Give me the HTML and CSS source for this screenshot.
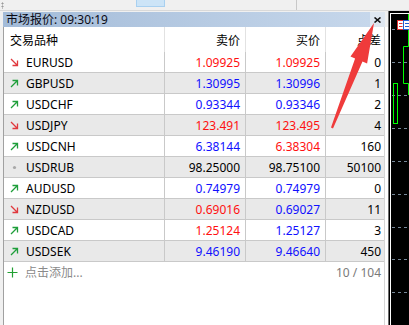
FILE: index.html
```html
<!DOCTYPE html>
<html lang="zh">
<head>
  <meta charset="UTF-8">
  <title>市场报价</title>
  <link rel="stylesheet" href="styles.css">
</head>
<body>
  <svg width="0" height="0" class="defs">
    <symbol id="icoDown" viewBox="0 0 9 9">
      <path d="M1 1 L7.5 7.5 M2.5 7.5 H7.5 V2.5" fill="none" stroke="#e0393e" stroke-width="1.3"/>
    </symbol>
    <symbol id="icoUp" viewBox="0 0 9 9">
      <path d="M1 8 L7.5 1.5 M2.5 1.5 H7.5 V6.5" fill="none" stroke="#1e9e3a" stroke-width="1.3"/>
    </symbol>
    <symbol id="icoFlat" viewBox="0 0 9 9">
      <circle cx="4.5" cy="4.5" r="1.6" fill="#a8a8a8"/>
    </symbol>
  </svg>

  <!-- 上方工具列殘留 -->
  <div id="topBar">
    <span class="grip"></span>
    <span class="tabBtn"></span>
    <span class="sepLine"></span>
  </div>

  <div id="workspace">
    <div id="dock">
      <div id="titleBar">
        <span class="titleText">市场报价: 09:30:19</span>
        <span class="closeBtn">
          <svg width="7" height="6" viewBox="0 0 7 6"><path d="M0.5 0.5 L6.5 5.5 M6.5 0.5 L0.5 5.5" stroke="#111" stroke-width="1.6"/></svg>
        </span>
      </div>

      <div id="quotePanel">
        <div class="quoteList">
          <div class="row head">
            <div class="cell sym">交易品种</div>
            <div class="cell num">卖价</div>
            <div class="cell num">买价</div>
            <div class="cell num">点差</div>
          </div>

          <div class="row">
            <div class="cell sym"><svg class="ico"><use href="#icoDown"/></svg>EURUSD</div>
            <div class="cell num red">1.09925</div>
            <div class="cell num red">1.09925</div>
            <div class="cell num">0</div>
          </div>
          <div class="row alt">
            <div class="cell sym"><svg class="ico"><use href="#icoUp"/></svg>GBPUSD</div>
            <div class="cell num blue">1.30995</div>
            <div class="cell num blue">1.30996</div>
            <div class="cell num">1</div>
          </div>
          <div class="row">
            <div class="cell sym"><svg class="ico"><use href="#icoUp"/></svg>USDCHF</div>
            <div class="cell num blue">0.93344</div>
            <div class="cell num blue">0.93346</div>
            <div class="cell num">2</div>
          </div>
          <div class="row alt">
            <div class="cell sym"><svg class="ico"><use href="#icoDown"/></svg>USDJPY</div>
            <div class="cell num red">123.491</div>
            <div class="cell num red">123.495</div>
            <div class="cell num">4</div>
          </div>
          <div class="row">
            <div class="cell sym"><svg class="ico"><use href="#icoUp"/></svg>USDCNH</div>
            <div class="cell num blue">6.38144</div>
            <div class="cell num red">6.38304</div>
            <div class="cell num">160</div>
          </div>
          <div class="row alt">
            <div class="cell sym"><svg class="ico"><use href="#icoFlat"/></svg>USDRUB</div>
            <div class="cell num">98.25000</div>
            <div class="cell num">98.75100</div>
            <div class="cell num">50100</div>
          </div>
          <div class="row">
            <div class="cell sym"><svg class="ico"><use href="#icoUp"/></svg>AUDUSD</div>
            <div class="cell num blue">0.74979</div>
            <div class="cell num blue">0.74979</div>
            <div class="cell num">0</div>
          </div>
          <div class="row alt">
            <div class="cell sym"><svg class="ico"><use href="#icoDown"/></svg>NZDUSD</div>
            <div class="cell num red">0.69016</div>
            <div class="cell num blue">0.69027</div>
            <div class="cell num">11</div>
          </div>
          <div class="row">
            <div class="cell sym"><svg class="ico"><use href="#icoUp"/></svg>USDCAD</div>
            <div class="cell num red">1.25124</div>
            <div class="cell num blue">1.25127</div>
            <div class="cell num">3</div>
          </div>
          <div class="row alt">
            <div class="cell sym"><svg class="ico"><use href="#icoUp"/></svg>USDSEK</div>
            <div class="cell num blue">9.46190</div>
            <div class="cell num blue">9.46640</div>
            <div class="cell num">450</div>
          </div>

          <!-- 新增品種 -->
          <div class="addRow">
            <svg class="plus" width="11" height="11" viewBox="0 0 11 11"><path d="M5.5 0.5 V10.5 M0.5 5.5 H10.5" stroke="#22a033" stroke-width="1.2"/></svg>
            <span class="addText">点击添加...</span>
            <span class="count">10 / 104</span>
          </div>
        </div>
      </div>
    </div>

    <!-- 右側圖表 -->
    <div id="chart">
      <svg width="21" height="314" viewBox="0 0 21 314">
        <line x1="0.5" y1="0" x2="0.5" y2="314" stroke="#6e6e6e"/>
        <line x1="2.5" y1="2" x2="2.5" y2="314" stroke="#ffffff"/>
        <line x1="2" y1="2.5" x2="21" y2="2.5" stroke="#ffffff"/>
        <g stroke="#778899" stroke-dasharray="3 3">
          <line x1="4" y1="18.5" x2="21" y2="18.5"/>
          <line x1="4" y1="51.5" x2="21" y2="51.5"/>
          <line x1="4" y1="84.5" x2="21" y2="84.5"/>
          <line x1="4" y1="117.5" x2="21" y2="117.5"/>
          <line x1="4" y1="150.5" x2="21" y2="150.5"/>
          <line x1="4" y1="183.5" x2="21" y2="183.5"/>
          <line x1="4" y1="216.5" x2="21" y2="216.5"/>
          <line x1="4" y1="248.5" x2="21" y2="248.5"/>
          <line x1="4" y1="281.5" x2="21" y2="281.5"/>
        </g>
        <g fill="none" stroke="#00ff00">
          <polyline points="20.5,3 20.5,35.5 15.5,35.5 15.5,72.5 20.5,72.5 20.5,84"/>
          <rect x="5.5" y="72.5" width="4" height="40"/>
        </g>
        <rect x="9.5" y="9.5" width="6" height="9" fill="#fff" stroke="#e03030"/>
        <path d="M11 12.5 H14.5 M11 15.5 H14.5" stroke="#e03030"/>
        <rect x="15.5" y="9.5" width="6" height="9" fill="#fff" stroke="#2060d0"/>
        <path d="M17 12.5 H21 M17 15.5 H21" stroke="#2060d0"/>
      </svg>
    </div>
  </div>

  <!-- 紅色標註箭頭 -->
  <svg id="markArrow" width="409" height="325" viewBox="0 0 409 325">
    <polygon points="331,127.6 355.1,58.5 350.5,56.6 374,23 367.1,63.4 362.5,61.5 333,128.4" fill="#ef3b3b"/>
  </svg>
</body>
</html>
```

FILE: styles.css
```css
/* 全局 */
body {
  margin: 0;
  width: 409px;
  height: 325px;
  overflow: hidden;
  position: relative;
  background-color: #f0f0f0;
  font-family: "Noto Sans", "Noto Sans CJK SC", sans-serif;
  font-size: 12px;
  color: #000;
}
.defs {
  position: absolute;
}

/* 上方工具列 */
#topBar {
  height: 10px;
  border-bottom: 1px solid #d9d9d9;
  display: flex;
  align-items: flex-start;
}
.grip {
  width: 3px;
  height: 7px;
  margin: 2px 0 0 1px;
  background-image: radial-gradient(circle, #9a9a9a 45%, transparent 50%);
  background-size: 3px 3px;
}
.tabBtn {
  width: 27px;
  height: 6px;
  margin-left: 132px;
  background-color: #cce4f7;
  border: 1px solid #a8d0f0;
  border-top: none;
}
.sepLine {
  width: 1px;
  height: 10px;
  margin-left: 131px;
  background-color: #c8c8c8;
}

/* 工作區 */
#workspace {
  display: flex;
  height: 314px;
}
#dock {
  width: 388px;
  padding: 1px 0 0 3px;
  box-sizing: border-box;
  display: flex;
  flex-direction: column;
}

/* 標題列 */
#titleBar {
  width: 382px;
  height: 15px;
  display: flex;
}
.titleText {
  flex: 1;
  padding-left: 3px;
  line-height: 15px;
  background: linear-gradient(to right, #a3bbd8, #c6d7eb);
  color: #0a0a14;
  white-space: nowrap;
}
.closeBtn {
  width: 15px;
  background-color: #dfe7f1;
  display: flex;
  align-items: center;
  justify-content: center;
}

/* 報價面板 */
#quotePanel {
  flex: 1;
  background-color: #fff;
  border-left: 1px solid #a0a0a0;
}
.quoteList {
  width: 381px;
  height: 100%;
  box-sizing: border-box;
  border-right: 1px solid #d6d6d6;
}
.row {
  display: grid;
  grid-template-columns: 161px 81px 80px 58px;
  height: 21px;
  box-sizing: border-box;
  border-bottom: 1px solid #c9c9c9;
}
.row.alt {
  background-color: #e9e9e9;
}
.row.head {
  height: 25px;
  border-bottom: none;
}
.cell {
  display: flex;
  align-items: center;
  white-space: nowrap;
  box-sizing: border-box;
  border-right: 1px solid #c9c9c9;
}
.cell:last-child {
  border-right: none;
}
.head .cell {
  border-right-color: #e2e2e2;
}
.head .cell:last-child {
  border-right: none;
}
.sym {
  padding-left: 6px;
}
.head .sym {
  padding-left: 6px;
}
.num {
  justify-content: flex-end;
  padding-right: 5px;
}
.cell:last-child.num {
  padding-right: 3px;
}
.red {
  color: #ff1010;
}
.blue {
  color: #1010ff;
}
.ico {
  width: 9px;
  height: 9px;
  margin-right: 7px;
  flex: none;
}

/* 新增列 */
.addRow {
  height: 20px;
  display: flex;
  align-items: center;
  padding: 0 3px 0 3px;
}
.plus {
  flex: none;
}
.addText {
  margin-left: 7px;
  color: #8a8a8a;
}
.count {
  margin-left: auto;
  color: #7a7a7a;
}

/* 圖表 */
#chart {
  flex: 1;
  background-color: #000;
}
#chart svg {
  display: block;
}

/* 標註箭頭 */
#markArrow {
  position: absolute;
  left: 0;
  top: 0;
  pointer-events: none;
}
```
